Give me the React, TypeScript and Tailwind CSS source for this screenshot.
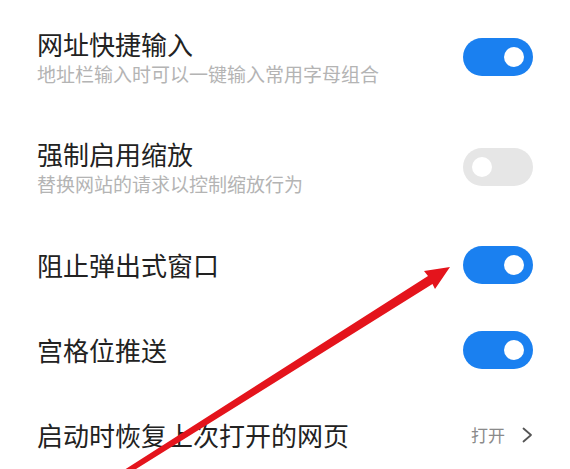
import React from "react";

function Toggle({ on }: { on: boolean }) {
  return (
    <div
      className={
        on
          ? "flex h-[38px] w-[70px] shrink-0 items-center justify-end rounded-full bg-[#1a80f0] px-[9px]"
          : "flex h-[38px] w-[70px] shrink-0 items-center justify-start rounded-full bg-[#e6e6e6] px-[9px]"
      }
    >
      <div className="h-[20px] w-[20px] rounded-full bg-white" />
    </div>
  );
}

function Row({
  title,
  sub,
  right,
  tall,
}: {
  title: string;
  sub?: string;
  right: React.ReactNode;
  tall?: boolean;
}) {
  return (
    <div
      className={
        tall
          ? "flex h-[110px] items-center justify-between px-[37px]"
          : "flex h-[85px] items-center justify-between px-[37px]"
      }
    >
      <div className="flex flex-col gap-[1px]">
        <div className="text-[26px] leading-[32px] text-[#222222]">{title}</div>
        {sub && <div className="text-[19px] leading-[26px] text-[#b4b4b4]">{sub}</div>}
      </div>
      {right}
    </div>
  );
}

export default function App() {
  return (
    <div
      className="relative h-[469px] w-[570px] overflow-hidden bg-white pt-[2px]"
      style={{ fontFamily: '"Noto Sans CJK SC", "Noto Sans", sans-serif' }}
    >
      <Row tall title="网址快捷输入" sub="地址栏输入时可以一键输入常用字母组合" right={<Toggle on />} />
      <Row tall title="强制启用缩放" sub="替换网站的请求以控制缩放行为" right={<Toggle on={false} />} />
      <Row title="阻止弹出式窗口" right={<Toggle on />} />
      <Row title="宫格位推送" right={<Toggle on />} />
      <Row
        title="启动时恢复上次打开的网页"
        right={
          <div className="flex items-center gap-[17px]">
            <span className="text-[17px] leading-[24px] text-[#8a8a8a]">打开</span>
            <svg width="11" height="16" viewBox="0 0 11 16" fill="none">
              <path d="M1.5 1.5 L9 8 L1.5 14.5" stroke="#555" strokeWidth="1.8" strokeLinecap="round" strokeLinejoin="round" />
            </svg>
          </div>
        }
      />
      <svg
        className="pointer-events-none absolute left-0 top-0"
        width="570"
        height="469"
        viewBox="0 0 570 469"
      >
        <polygon
          points="450,267 424,271 428,276 121,472 124,476.5 432.5,284 435,289"
          fill="#e4141c"
        />
      </svg>
    </div>
  );
}
